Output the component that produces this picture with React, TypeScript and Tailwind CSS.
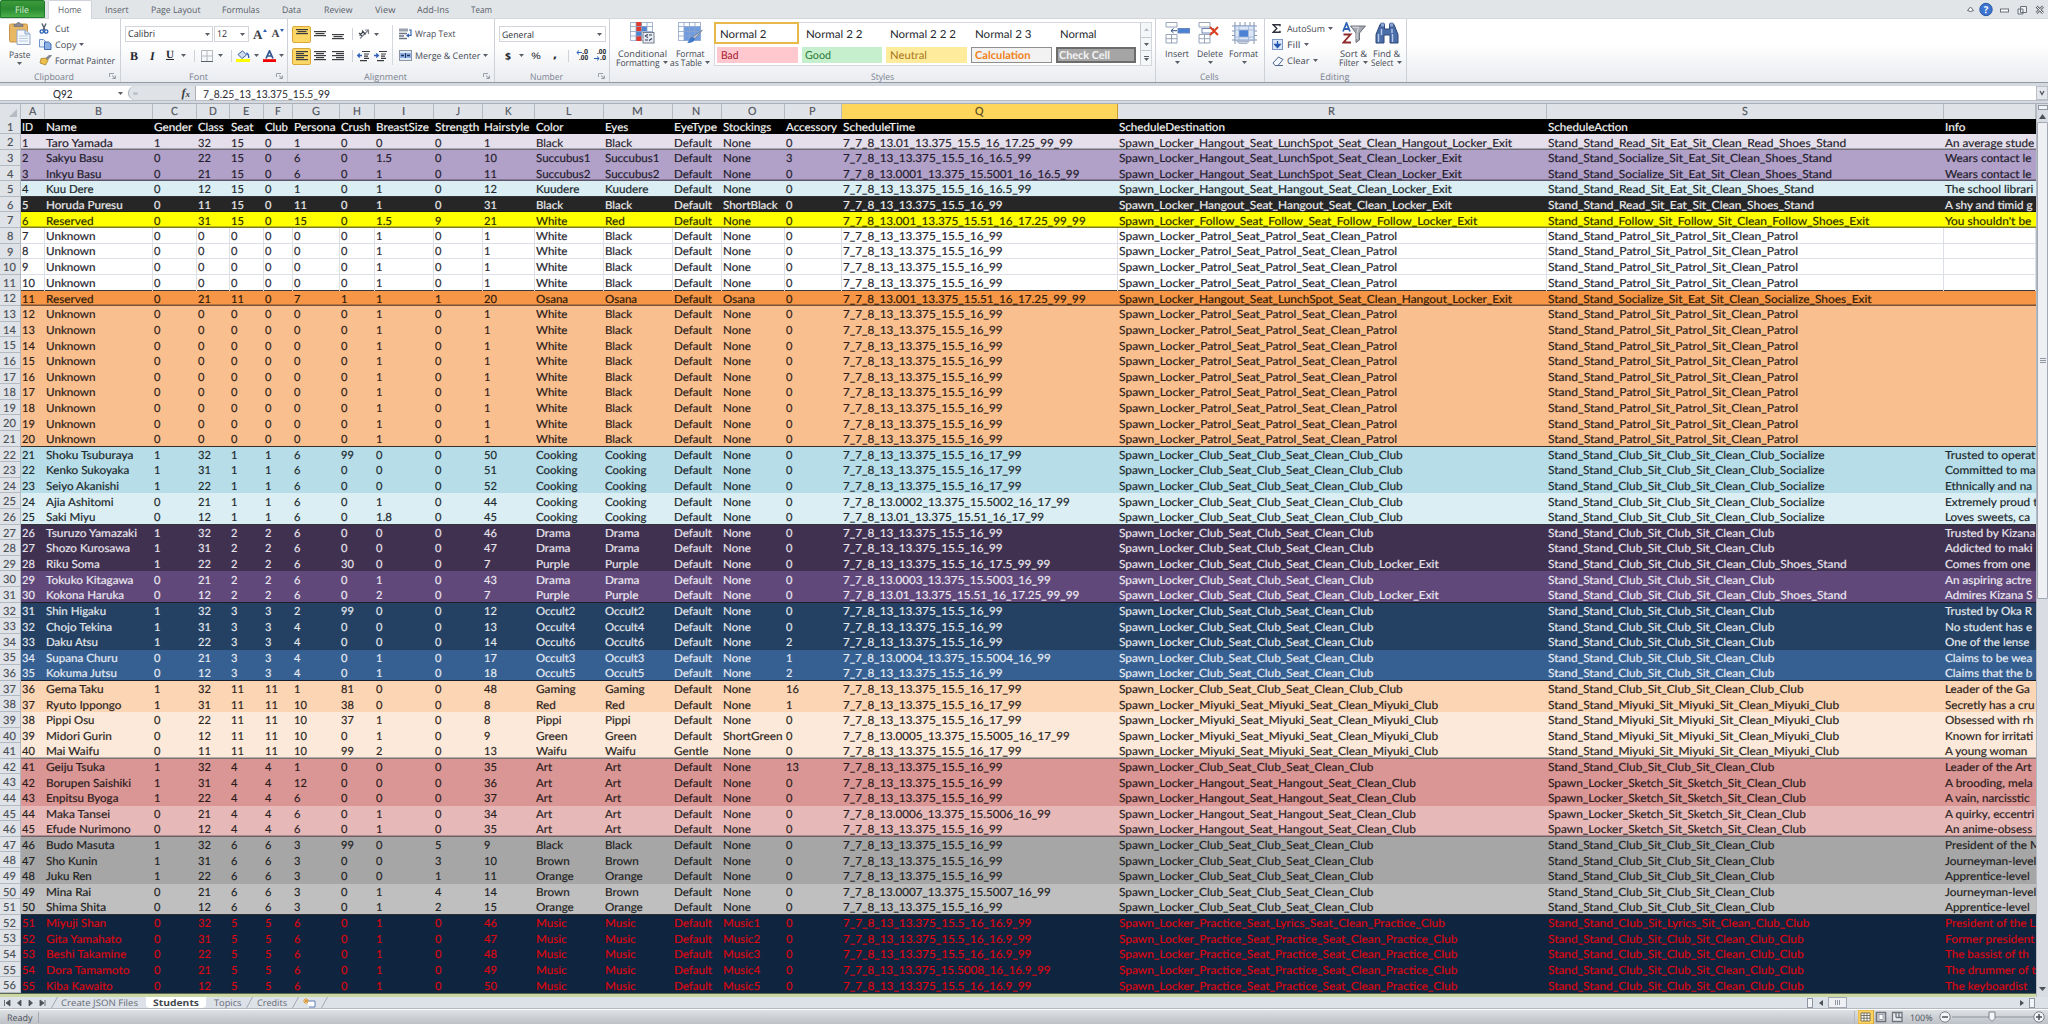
import React from "react";

const SHEET_FONT = "Lato, 'Open Sans', sans-serif";
const UI_FONT = "'Open Sans', 'Noto Sans', sans-serif";

/* ---------- text fitting ---------- */

const ctx = document.createElement("canvas").getContext("2d")!;

function natural(text: string, size: number, family: string, bold = false) {
  ctx.font = `${bold ? "bold " : ""}100px ${family}`;
  return (ctx.measureText(text).width * size) / 100;
}

// Advance widths of the sheet face, in 1/2048 em.
const ADV: Record<string, number> = {
  " ": 463, a: 981, b: 1076, c: 866, d: 1076, e: 1019, f: 625, g: 964, h: 1076, i: 470, j: 490, k: 931, l: 470,
  m: 1636, n: 1076, o: 1080, p: 1076, q: 1076, r: 714, s: 801, t: 686, u: 1076, v: 925, w: 1464, x: 887, y: 927,
  z: 809, A: 1185, B: 1114, C: 1092, D: 1260, E: 1000, F: 941, G: 1292, H: 1276, I: 516, J: 653, K: 1064, L: 861,
  M: 1751, N: 1322, O: 1356, P: 1058, Q: 1378, R: 1112, S: 941, T: 998, U: 1314, V: 1162, W: 1822, X: 1063,
  Y: 998, Z: 959, _: 1020, ".": 517, ",": 511, "-": 627, "'": 452,
};

function sheetWidth(text: string) {
  let sum = 0;
  for (const ch of text) sum += ADV[ch] ?? 1038;
  return (sum / 2048) * 12.67;
}

type FitProps = { t: string; w: number; size?: number; sheet?: boolean; bold?: boolean; className?: string };

function Fit({ t, w, size = 9, sheet = false, bold = false, className = "" }: FitProps) {
  const family = sheet ? SHEET_FONT : UI_FONT;
  const n = natural(t, size, family, bold);
  return (
    <span
      className={`inline-block shrink-0 origin-left whitespace-pre ${bold ? "font-bold" : ""} ${className}`}
      style={{ fontFamily: family, fontSize: size, transform: `scaleX(${w / n})`, marginRight: w - n }}
    >
      {t}
    </span>
  );
}

function Cell({ t }: { t: string }) {
  return <Fit t={t} w={sheetWidth(t)} size={11.2} sheet className="[-webkit-text-stroke:0.18px_currentColor]" />;
}

/* ---------- sheet data ---------- */

const COLS: { name: string; cls: string }[] = [
  { name: "A", cls: "w-[24.5px]" },
  { name: "B", cls: "w-[108px]" },
  { name: "C", cls: "w-[43.5px]" },
  { name: "D", cls: "w-[33.5px]" },
  { name: "E", cls: "w-[33.5px]" },
  { name: "F", cls: "w-[29px]" },
  { name: "G", cls: "w-[47px]" },
  { name: "H", cls: "w-[35px]" },
  { name: "I", cls: "w-[59.5px]" },
  { name: "J", cls: "w-[48.5px]" },
  { name: "K", cls: "w-[52px]" },
  { name: "L", cls: "w-[69px]" },
  { name: "M", cls: "w-[69px]" },
  { name: "N", cls: "w-[49px]" },
  { name: "O", cls: "w-[63px]" },
  { name: "P", cls: "w-[57.5px]" },
  { name: "Q", cls: "w-[275.5px]" },
  { name: "R", cls: "w-[429px]" },
  { name: "S", cls: "w-[397.5px]" },
  { name: "", cls: "w-[92px]" },
];

const HEAD =
  "ID|Name|Gender|Class|Seat|Club|Persona|Crush|BreastSize|Strength|Hairstyle|Color|Eyes|EyeType|Stockings|Accessory|ScheduleTime|ScheduleDestination|ScheduleAction|Info";

const T99 = "7_7_8_13_13.375_15.5_16_99";
const T17 = "7_7_8_13_13.375_15.5_16_17_99";
const T165 = "7_7_8_13_13.375_15.5_16_16.5_99";
const T169 = "7_7_8_13_13.375_15.5_16_16.9_99";
const PATROL = T99 + "|Spawn_Locker_Patrol_Seat_Patrol_Seat_Clean_Patrol|Stand_Stand_Patrol_Sit_Patrol_Sit_Clean_Patrol|";
const EMPTY = "Unknown|0|0|0|0|0|0|1|0|1|White|Black|Default|None|0|" + PATROL;
const D_CLUB = "Spawn_Locker_Club_Seat_Club_Seat_Clean_Club";
const A_CLUB = "Stand_Stand_Club_Sit_Club_Sit_Clean_Club";
const D_COOK = D_CLUB + "_Club|" + A_CLUB + "_Socialize";
const CLUB = D_CLUB + "|" + A_CLUB;
const CLUB_EXIT = D_CLUB + "_Locker_Exit|" + A_CLUB + "_Shoes_Stand";
const MIYUKI =
  "Spawn_Locker_Miyuki_Seat_Miyuki_Seat_Clean_Miyuki_Club|Stand_Stand_Miyuki_Sit_Miyuki_Sit_Clean_Miyuki_Club";
const SKETCH =
  "Spawn_Locker_Hangout_Seat_Hangout_Seat_Clean_Club|Spawn_Locker_Sketch_Sit_Sketch_Sit_Clean_Club";
const PRACTICE = "Spawn_Locker_Practice_Seat_Practice_Seat_Clean_Practice_Club|" + A_CLUB + "_Club";
const LUNCH = "Spawn_Locker_Hangout_Seat_LunchSpot_Seat_Clean_";
const HANG = "Spawn_Locker_Hangout_Seat_Hangout_Seat_Clean_Locker_Exit";

const C = {
  head: "bg-black text-[#f4f4f4]",
  lilac: "bg-[#e5dfec] text-[#26222c]",
  violet: "bg-[#b1a0c7] text-[#221c2c]",
  ice: "bg-[#daeef3] text-[#20282c]",
  coal: "bg-[#262626] text-[#ececec]",
  yellow: "bg-[#ffff00] text-[#2c2c00]",
  white: "bg-white text-[#262630]",
  orange: "bg-[#f79646] text-[#2c1a0a]",
  peach: "bg-[#fabf8f] text-[#2c2018]",
  aqua: "bg-[#b6dde8] text-[#1c282c]",
  plum: "bg-[#403151] text-[#e8e4ec]",
  grape: "bg-[#60497a] text-[#ece8f2]",
  navy: "bg-[#244062] text-[#e2e8ee]",
  blue: "bg-[#366092] text-[#e6ecf4]",
  apricot: "bg-[#fcd5b4] text-[#2a211a]",
  cream: "bg-[#fde9d9] text-[#2a2522]",
  rose: "bg-[#da9694] text-[#2a1a1a]",
  pink: "bg-[#e6b8b7] text-[#2a1f1f]",
  gray: "bg-[#a6a6a6] text-[#1e1e22]",
  silver: "bg-[#bfbfbf] text-[#1e1e22]",
  night: "bg-[#0f243e] text-[#dc0612]",
};

type Edge = "" | "thin" | "thick";
const R: [string, Edge, string][] = [
  [C.head, "", HEAD],
  [C.lilac, "thick", "1|Taro Yamada|1|32|15|0|1|0|0|0|1|Black|Black|Default|None|0|7_7_8_13.01_13.375_15.5_16_17.25_99_99|" + LUNCH + "Hangout_Locker_Exit|Stand_Stand_Read_Sit_Eat_Sit_Clean_Read_Shoes_Stand|An average stude"],
  [C.violet, "", "2|Sakyu Basu|0|22|15|0|6|0|1.5|0|10|Succubus1|Succubus1|Default|None|3|" + T165 + "|" + LUNCH + "Locker_Exit|Stand_Stand_Socialize_Sit_Eat_Sit_Clean_Shoes_Stand|Wears contact le"],
  [C.violet, "thick", "3|Inkyu Basu|0|21|15|0|6|0|1|0|11|Succubus2|Succubus2|Default|None|0|7_7_8_13.0001_13.375_15.5001_16_16.5_99|" + LUNCH + "Locker_Exit|Stand_Stand_Socialize_Sit_Eat_Sit_Clean_Shoes_Stand|Wears contact le"],
  [C.ice, "thin", "4|Kuu Dere|0|12|15|0|1|0|1|0|12|Kuudere|Kuudere|Default|None|0|" + T165 + "|" + HANG + "|Stand_Stand_Read_Sit_Eat_Sit_Clean_Shoes_Stand|The school librari"],
  [C.coal, "thin", "5|Horuda Puresu|0|11|15|0|11|0|1|0|31|Black|Black|Default|ShortBlack|0|" + T99 + "|" + HANG + "|Stand_Stand_Read_Sit_Eat_Sit_Clean_Shoes_Stand|A shy and timid g"],
  [C.yellow, "thick", "6|Reserved|0|31|15|0|15|0|1.5|9|21|White|Red|Default|None|0|7_7_8_13.001_13.375_15.51_16_17.25_99_99|Spawn_Locker_Follow_Seat_Follow_Seat_Follow_Follow_Locker_Exit|Stand_Stand_Follow_Sit_Follow_Sit_Clean_Follow_Shoes_Exit|You shouldn't be"],
  [C.white, "", "7|" + EMPTY],
  [C.white, "", "8|" + EMPTY],
  [C.white, "", "9|" + EMPTY],
  [C.white, "thin", "10|" + EMPTY],
  [C.orange, "thick", "11|Reserved|0|21|11|0|7|1|1|1|20|Osana|Osana|Default|Osana|0|7_7_8_13.001_13.375_15.51_16_17.25_99_99|" + LUNCH + "Hangout_Locker_Exit|Stand_Stand_Socialize_Sit_Eat_Sit_Clean_Socialize_Shoes_Exit|"],
  [C.peach, "", "12|" + EMPTY],
  [C.peach, "", "13|" + EMPTY],
  [C.peach, "", "14|" + EMPTY],
  [C.peach, "", "15|" + EMPTY],
  [C.peach, "", "16|" + EMPTY],
  [C.peach, "", "17|" + EMPTY],
  [C.peach, "", "18|" + EMPTY],
  [C.peach, "", "19|" + EMPTY],
  [C.peach, "thin", "20|" + EMPTY],
  [C.aqua, "", "21|Shoku Tsuburaya|1|32|1|1|6|99|0|0|50|Cooking|Cooking|Default|None|0|" + T17 + "|" + D_COOK + "|Trusted to operat"],
  [C.aqua, "", "22|Kenko Sukoyaka|1|31|1|1|6|0|0|0|51|Cooking|Cooking|Default|None|0|" + T17 + "|" + D_COOK + "|Committed to ma"],
  [C.aqua, "", "23|Seiyo Akanishi|1|22|1|1|6|0|0|0|52|Cooking|Cooking|Default|None|0|" + T17 + "|" + D_COOK + "|Ethnically and na"],
  [C.ice, "", "24|Ajia Ashitomi|0|21|1|1|6|0|1|0|44|Cooking|Cooking|Default|None|0|7_7_8_13.0002_13.375_15.5002_16_17_99|" + D_COOK + "|Extremely proud t"],
  [C.ice, "thin", "25|Saki Miyu|0|12|1|1|6|0|1.8|0|45|Cooking|Cooking|Default|None|0|7_7_8_13.01_13.375_15.51_16_17_99|" + D_COOK + "|Loves sweets, ca"],
  [C.plum, "", "26|Tsuruzo Yamazaki|1|32|2|2|6|0|0|0|46|Drama|Drama|Default|None|0|" + T99 + "|" + CLUB + "|Trusted by Kizana"],
  [C.plum, "", "27|Shozo Kurosawa|1|31|2|2|6|0|0|0|47|Drama|Drama|Default|None|0|" + T99 + "|" + CLUB + "|Addicted to maki"],
  [C.plum, "", "28|Riku Soma|1|22|2|2|6|30|0|0|7|Purple|Purple|Default|None|0|7_7_8_13_13.375_15.5_16_17.5_99_99|" + CLUB_EXIT + "|Comes from one"],
  [C.grape, "", "29|Tokuko Kitagawa|0|21|2|2|6|0|1|0|43|Drama|Drama|Default|None|0|7_7_8_13.0003_13.375_15.5003_16_99|" + CLUB + "|An aspiring actre"],
  [C.grape, "thin", "30|Kokona Haruka|0|12|2|2|6|0|2|0|7|Purple|Purple|Default|None|0|7_7_8_13.01_13.375_15.51_16_17.25_99_99|" + CLUB_EXIT + "|Admires Kizana S"],
  [C.navy, "", "31|Shin Higaku|1|32|3|3|2|99|0|0|12|Occult2|Occult2|Default|None|0|" + T99 + "|" + CLUB + "|Trusted by Oka R"],
  [C.navy, "", "32|Chojo Tekina|1|31|3|3|4|0|0|0|13|Occult4|Occult4|Default|None|0|" + T99 + "|" + CLUB + "|No student has e"],
  [C.navy, "", "33|Daku Atsu|1|22|3|3|4|0|0|0|14|Occult6|Occult6|Default|None|2|" + T99 + "|" + CLUB + "|One of the lense"],
  [C.blue, "", "34|Supana Churu|0|21|3|3|4|0|1|0|17|Occult3|Occult3|Default|None|1|7_7_8_13.0004_13.375_15.5004_16_99|" + CLUB + "|Claims to be wea"],
  [C.blue, "thin", "35|Kokuma Jutsu|0|12|3|3|4|0|1|0|18|Occult5|Occult5|Default|None|2|" + T99 + "|" + CLUB + "|Claims that the b"],
  [C.apricot, "", "36|Gema Taku|1|32|11|11|1|81|0|0|48|Gaming|Gaming|Default|None|16|" + T17 + "|" + D_CLUB + "_Club|" + A_CLUB + "_Club|Leader of the Ga"],
  [C.apricot, "", "37|Ryuto Ippongo|1|31|11|11|10|38|0|0|8|Red|Red|Default|None|1|" + T17 + "|" + MIYUKI + "|Secretly has a cru"],
  [C.cream, "", "38|Pippi Osu|0|22|11|11|10|37|1|0|8|Pippi|Pippi|Default|None|0|" + T17 + "|" + MIYUKI + "|Obsessed with rh"],
  [C.cream, "", "39|Midori Gurin|0|12|11|11|10|0|1|0|9|Green|Green|Default|ShortGreen|0|7_7_8_13.0005_13.375_15.5005_16_17_99|" + MIYUKI + "|Known for irritati"],
  [C.cream, "thick", "40|Mai Waifu|0|11|11|11|10|99|2|0|13|Waifu|Waifu|Gentle|None|0|" + T17 + "|" + MIYUKI + "|A young woman"],
  [C.rose, "", "41|Geiju Tsuka|1|32|4|4|1|0|0|0|35|Art|Art|Default|None|13|" + T99 + "|" + CLUB + "|Leader of the Art"],
  [C.rose, "", "42|Borupen Saishiki|1|31|4|4|12|0|0|0|36|Art|Art|Default|None|0|" + T99 + "|" + SKETCH + "|A brooding, mela"],
  [C.rose, "", "43|Enpitsu Byoga|1|22|4|4|6|0|0|0|37|Art|Art|Default|None|0|" + T99 + "|" + SKETCH + "|A vain, narcisstic"],
  [C.pink, "", "44|Maka Tansei|0|21|4|4|6|0|1|0|34|Art|Art|Default|None|0|7_7_8_13.0006_13.375_15.5006_16_99|" + SKETCH + "|A quirky, eccentri"],
  [C.pink, "thick", "45|Efude Nurimono|0|12|4|4|6|0|1|0|35|Art|Art|Default|None|0|" + T99 + "|" + SKETCH + "|An anime-obsess"],
  [C.gray, "", "46|Budo Masuta|1|32|6|6|3|99|0|5|9|Black|Black|Default|None|0|" + T99 + "|" + CLUB + "|President of the M"],
  [C.gray, "", "47|Sho Kunin|1|31|6|6|3|0|0|3|10|Brown|Brown|Default|None|0|" + T99 + "|" + CLUB + "|Journeyman-level"],
  [C.gray, "", "48|Juku Ren|1|22|6|6|3|0|0|1|11|Orange|Orange|Default|None|0|" + T99 + "|" + CLUB + "|Apprentice-level"],
  [C.silver, "", "49|Mina Rai|0|21|6|6|3|0|1|4|14|Brown|Brown|Default|None|0|7_7_8_13.0007_13.375_15.5007_16_99|" + CLUB + "|Journeyman-level"],
  [C.silver, "thin", "50|Shima Shita|0|12|6|6|3|0|1|2|15|Orange|Orange|Default|None|0|" + T99 + "|" + CLUB + "|Apprentice-level"],
  [C.night, "", "51|Miyuji Shan|0|32|5|5|6|0|1|0|46|Music|Music|Default|Music1|0|" + T169 + "|Spawn_Locker_Practice_Seat_Lyrics_Seat_Clean_Practice_Club|Stand_Stand_Club_Sit_Lyrics_Sit_Clean_Club_Club|President of the L"],
  [C.night, "", "52|Gita Yamahato|0|31|5|5|6|0|1|0|47|Music|Music|Default|Music2|0|" + T169 + "|" + PRACTICE + "|Former president"],
  [C.night, "", "53|Beshi Takamine|0|22|5|5|6|0|1|0|48|Music|Music|Default|Music3|0|" + T169 + "|" + PRACTICE + "|The bassist of th"],
  [C.night, "", "54|Dora Tamamoto|0|21|5|5|6|0|1|0|49|Music|Music|Default|Music4|0|7_7_8_13_13.375_15.5008_16_16.9_99|" + PRACTICE + "|The drummer of t"],
  [C.night, "", "55|Kiba Kawaito|0|12|5|5|6|0|1|0|50|Music|Music|Default|Music5|0|" + T169 + "|" + PRACTICE + "|The keyboardist"],
];

const EDGE: Record<Edge, string> = {
  "": "",
  thin: "shadow-[inset_0_-1px_0_rgba(20,20,24,0.85)]",
  thick: "shadow-[inset_0_-1.5px_0_rgba(40,40,48,0.62)]",
};

function SheetRow({ i }: { i: number }) {
  const [tone, edge, line] = R[i];
  const grid = tone === C.white;
  return (
    <div className="flex h-[15.62px] shrink-0">
      <div className="flex w-[20.5px] shrink-0 items-center justify-center border-r border-b border-[#b4bac2] bg-[#dfe3e8] pt-[2.5px] text-[#4c5058]">
        <Cell t={String(i + 1)} />
      </div>
      <div className={`flex grow overflow-hidden ${tone} ${EDGE[edge]}`}>
        {line.split("|").map((t, k) => (
          <div
            key={k}
            className={`flex shrink-0 items-center pt-[2px] pl-[1.4px] leading-none ${COLS[k].cls} ${
              grid ? (edge ? "border-r border-[#dcdfe6]" : "border-r border-b border-[#dcdfe6]") : ""
            }`}
          >
            {t && <Cell t={t} />}
          </div>
        ))}
      </div>
    </div>
  );
}

/* ---------- small drawings ---------- */

function Arrow({ className = "" }: { className?: string }) {
  return (
    <svg className={`shrink-0 ${className}`} width="5" height="3" viewBox="0 0 5 3">
      <path d="M0 0h5L2.5 3z" fill="#5a5e66" />
    </svg>
  );
}

function Sep({ className = "" }: { className?: string }) {
  return <div className={`h-3 w-px shrink-0 bg-[#cfd3d9] ${className}`} />;
}

function Lines({ rows, align = "c", y = 0 }: { rows: number[]; align?: "l" | "c" | "r"; y?: number }) {
  return (
    <svg width="12" height="12" viewBox="0 0 12 12" className="shrink-0">
      {rows.map((w, i) => (
        <rect
          key={i}
          x={align === "l" ? 0 : align === "r" ? 12 - w : (12 - w) / 2}
          y={y + i * 2}
          width={w}
          height="1.2"
          fill="#3c3c40"
        />
      ))}
    </svg>
  );
}

function Indent({ out }: { out?: boolean }) {
  return (
    <svg width="13" height="12" viewBox="0 0 13 12" className="shrink-0">
      <path d="M5 1.5h8M7 4h5M7 6.2h4M7 8.4h5M3 10.6h7" stroke="#3c3c40" strokeWidth="1.2" />
      <path d={out ? "M0 5.5h4M2.2 3.5l2.2 2-2.2 2" : "M5 5.5H1M2.8 3.5L.6 5.5l2.2 2"} stroke="#2f62b5" strokeWidth="1.3" fill="none" />
    </svg>
  );
}

function Group({ label, w, lw, launcher, children }: { label: string; w: string; lw: number; launcher?: boolean; children: React.ReactNode }) {
  return (
    <div className={`flex shrink-0 flex-col border-r border-[#cdd2d8] ${w}`}>
      <div className="flex h-[50px]">{children}</div>
      <div className="flex h-[13px] items-center pt-px text-[#7b8290]">
        <div className="flex grow justify-center">
          <Fit t={label} w={lw} />
        </div>
        {launcher && (
          <svg width="7" height="6" viewBox="0 0 7 6" className="mr-1">
            <path d="M.5 4V.5H5" stroke="#9aa0aa" fill="none" />
            <path d="M3 2.5l3 2.8M6.3 2.6v3H3.4" stroke="#8a909a" fill="none" />
          </svg>
        )}
      </div>
    </div>
  );
}

function BigButton({ icon, a, aw, b, bw, w }: { icon: React.ReactNode; a: string; aw: number; b?: string; bw?: number; w: string }) {
  return (
    <div className={`flex shrink-0 flex-col items-center pt-[3px] leading-none text-[#454a54] ${w}`}>
      {icon}
      <div className="mt-[4px] flex h-[10px] items-center">
        <Fit t={a} w={aw} />
      </div>
      <div className="flex h-[9px] items-center gap-[3px]">
        {b && <Fit t={b} w={bw!} />}
        <Arrow />
      </div>
    </div>
  );
}

function SmallButton({ icon, t, w, arrow }: { icon: React.ReactNode; t: string; w: number; arrow?: boolean }) {
  return (
    <div className="flex h-[16.3px] items-center text-[#454a54]">
      <div className="flex w-[15.5px] items-center">{icon}</div>
      <Fit t={t} w={w} />
      {arrow && <Arrow className="ml-[3px]" />}
    </div>
  );
}

const TABS: [string, number, string][] = [
  ["Insert", 23.5, "ml-[12.5px]"],
  ["Page Layout", 49.5, "ml-[22.5px]"],
  ["Formulas", 37.5, "ml-[22px]"],
  ["Data", 19, "ml-[22.5px]"],
  ["Review", 28.5, "ml-[22.5px]"],
  ["View", 20.5, "ml-[22.5px]"],
  ["Add-Ins", 32, "ml-[22px]"],
  ["Team", 21, "ml-[22px]"],
];

function TabBar() {
  return (
    <div className="flex h-[19px] items-center border-b border-[#d3d7dc] bg-[#e1e5e8] text-[#5a5f68]">
      <div className="flex h-[18px] w-[44.5px] items-center justify-center rounded-t-[2px] border border-[#1f7a2c] bg-linear-to-b from-[#3d9a3c] via-[#2a8a30] to-[#4bb04a] text-[#d8f0d4]">
        <Fit t="File" w={14} />
      </div>
      <div className="ml-[3.5px] flex h-[19px] w-[44px] items-center justify-center rounded-t-[2px] border-x border-t border-[#d0d4da] bg-white">
        <Fit t="Home" w={23.5} />
      </div>
      {TABS.map(([t, w, m]) => (
        <div key={t} className={`flex items-center ${m}`}>
          <Fit t={t} w={w} />
        </div>
      ))}
      <svg className="mr-[3px] ml-auto" width="82" height="16" viewBox="0 0 82 16">
        <path d="M4.5 9.5L7.5 6l3 3.5-3 1z" fill="#fff" stroke="#5e636c" />
        <circle cx="23" cy="8.5" r="6.2" fill="#3d74cf" stroke="#2a5aa8" />
        <text x="23" y="12" textAnchor="middle" fontSize="9.5" fontWeight="700" fill="#fff" fontFamily="Open Sans">?</text>
        <rect x="37.5" y="8" width="8" height="3" fill="#fff" stroke="#6b7079" />
        <path d="M57.500 5.500h6v6h-6zM55 8h5v5h-5z" fill="#eef0f3" stroke="#6b7079" />
        <path d="M73.500 5.500l6.500 6.500M80 5.500l-6.500 6.500" stroke="#5e636c" strokeWidth="2.600" />
        <path d="M73.500 5.500l6.500 6.500M80 5.500l-6.500 6.500" stroke="#fff" strokeWidth="1" />
      </svg>
    </div>
  );
}

function PasteIcon() {
  return (
    <svg width="22" height="23" viewBox="0 0 22 23">
      <rect x="0.500" y="2" width="18" height="18" rx="1.500" fill="#e9b862" stroke="#c8924a" />
      <path d="M5 4.500V2.500h2.500a2 2 0 014 0H14v2z" fill="#8c8f98" stroke="#676b74" strokeWidth=".7" />
      <path d="M8 8h8l5 4v10.500H8z" fill="#f4f8fd" stroke="#8ea6c8" />
      <path d="M16 8v4h5" fill="#cfdff2" stroke="#8ea6c8" />
      <path d="M10 14h9M10 16.500h9M10 19h9" stroke="#b9cbe2" />
    </svg>
  );
}

function GridIcon({ kind }: { kind: "cond" | "table" }) {
  return (
    <svg width="25" height="22" viewBox="0 0 25 22">
      <rect x=".5" y=".5" width="22" height="18" fill="#fbfcfe" stroke="#a9b8d2" />
      {kind === "cond" ? (
        <>
          <rect x="6" y="0" width="6" height="19" fill="#e23a2c" />
          <rect x="12" y="4" width="5" height="5" fill="#4f83cf" />
          <rect x="6" y="9" width="6" height="5" fill="#4f83cf" />
        </>
      ) : (
        <rect x="6" y="4.500" width="16.500" height="14" fill="#6f9be0" />
      )}
      <path d="M6 0v19M11.500 0v19M17 0v19M0 4.500h23M0 9.500h23M0 14h23" stroke="#8da3c8" strokeWidth=".8" />
      {kind === "cond" ? (
        <>
          <rect x="13" y="10.500" width="11" height="10.500" fill="#e8ecf2" stroke="#747d8e" />
          <path d="M15 14l3-1.500M15 14l3 1.500M22 16.500l-3 2M15 18h3M19 13h3" stroke="#2f3d58" strokeWidth="1.100" />
        </>
      ) : (
        <>
          <path d="M24.500 8l-8 9-2.500-1.500z" fill="#c7ccd5" stroke="#6d7482" strokeWidth=".7" />
          <path d="M17 16c0 4-4 5-8 5 2-1 2-5 5-6z" fill="#3f78c9" />
        </>
      )}
    </svg>
  );
}

function CellsIcon({ kind }: { kind: "insert" | "delete" | "format" }) {
  if (kind === "format")
    return (
      <svg width="25" height="22" viewBox="0 0 25 22">
        <path d="M3 0v22M8 0v4M13 0v4M18 0v4M22 0v22M0 4h25M0 18h25M0 9h3M0 13.500h3M22 9h3M22 13.500h3" stroke="#8494b0" />
        <rect x="3" y="4" width="19" height="14" fill="#dce7f7" stroke="#8ea5cb" />
        <rect x="7" y="8" width="9" height="7" fill="#4b82d6" />
        <path d="M7 4v14M16.500 4v14M3 8h19M3 15h19" stroke="#9fb3d4" strokeWidth=".8" />
        <path d="M5 19.500h12l-2 2H7z" fill="#c7d2e4" stroke="#8494b0" strokeWidth=".6" />
      </svg>
    );
  return (
    <svg width="25" height="22" viewBox="0 0 25 22">
      <path d="M1 .5h11v4.500H1zM1 12.500h11v8.500H1zM1 16.700h11M6.500 12.500V21" fill="#fff" stroke="#98a4b8" />
      <rect x={kind === "insert" ? 13 : 4} y="6.500" width="11.500" height="4.500" fill={kind === "insert" ? "#4b82d6" : "#fff"} stroke="#6a86b8" />
      {kind === "insert" ? (
        <path d="M12 8.700H6M8.500 6.500L6 8.700l2.500 2.200" stroke="#33507f" fill="none" />
      ) : (
        <path d="M12 5l8 8M20 5l-8 8" stroke="#e03c1e" strokeWidth="2" />
      )}
    </svg>
  );
}

function SortIcon() {
  return (
    <svg width="24" height="22" viewBox="0 0 24 22">
      <path d="M1 9.500L4.500 1 8 9.500M2.300 7h4.400" stroke="#2f62b5" strokeWidth="1.800" fill="none" />
      <path d="M1.500 12.500h7l-7 8h7.500" stroke="#8e2a2a" strokeWidth="1.800" fill="none" />
      <path d="M8.500 4h15l-6 7v7l-3.500 2.500V11z" fill="#a3a8b0" stroke="#6e737c" />
      <path d="M10.500 5.200h6l-1.500 6v6" stroke="#dfe2e6" fill="none" />
    </svg>
  );
}

function FindIcon() {
  return (
    <svg width="24" height="22" viewBox="0 0 24 22">
      <path d="M5 2.500h4.500V7h5V2.500H19l4 10V21h-8v-8h-6v8H1v-8.500z" fill="#4c6ea8" stroke="#2c4677" />
      <rect x="5.500" y="1" width="4" height="4" rx="1" fill="#8ba7d6" stroke="#2c4677" strokeWidth=".6" />
      <rect x="14.500" y="1" width="4" height="4" rx="1" fill="#8ba7d6" stroke="#2c4677" strokeWidth=".6" />
      <path d="M3.500 12v8M6.500 7v6M17.500 12v8M17 7v4" stroke="#b6caea" strokeWidth="1.400" />
    </svg>
  );
}

const STYLES_TOP: [string, number][] = [
  ["Normal 2", 46.5],
  ["Normal 2 2", 56.5],
  ["Normal 2 2 2", 66],
  ["Normal 2 3", 56.5],
  ["Normal", 36.5],
];
const STYLES_LOW: [string, number, string, boolean][] = [
  ["Bad", 17.5, "bg-[#ffc7ce] text-[#a8182c]", false],
  ["Good", 26, "bg-[#c6efce] text-[#2a7a34]", false],
  ["Neutral", 37, "bg-[#ffeb9c] text-[#a8761a]", false],
  ["Calculation", 55.5, "border border-[#8f8f8f] bg-[#f2f2f2] text-[#f08220] pl-[2.5px]", true],
  ["Check Cell", 51, "border-2 border-[#6c6c6c] bg-[#a5a5a5] text-[#f4f4f4] pl-[1.5px]", true],
];

function Gallery() {
  return (
    <div className="mt-[3px] ml-[4px] flex h-[44px] w-[438px] shrink-0 border border-[#d4d8de] bg-white">
      <div className="flex grow flex-col">
        <div className="-mt-px -ml-px flex h-[22px]">
          {STYLES_TOP.map(([t, w], i) => (
            <div
              key={t}
              className={`flex w-[84.7px] shrink-0 items-center pt-[2px] ${
                i === 0 ? "border-2 border-[#e8b84a] pl-[4px]" : "pl-[7px]"
              }`}
            >
              <Fit t={t} w={w} size={11} sheet className="text-[#26282e]" />
            </div>
          ))}
        </div>
        <div className="mt-[3px] flex h-[16px] gap-[4.200px] pl-[2px]">
          {STYLES_LOW.map(([t, w, cls, bold]) => (
            <div key={t} className={`flex w-[80.5px] shrink-0 items-center ${cls} ${bold ? "" : "pl-[3.5px]"}`}>
              <Fit t={t} w={w} size={11} sheet bold={bold} />
            </div>
          ))}
        </div>
      </div>
      <div className="flex w-[11px] shrink-0 flex-col divide-y divide-[#c4c9d0] border-l border-[#c4c9d0] bg-[#f4f6f8]">
        <div className="flex h-[15px] items-center justify-center">
          <svg width="5" height="3"><path d="M0 3h5L2.500 0z" fill="#b8bcc4" /></svg>
        </div>
        <div className="flex h-[14px] items-center justify-center"><Arrow /></div>
        <div className="flex h-[14px] flex-col items-center justify-center gap-px">
          <div className="h-px w-[5px] bg-[#5a5e66]" />
          <Arrow />
        </div>
      </div>
    </div>
  );
}

const HOT = "flex h-[17px] w-[19px] shrink-0 items-center justify-center rounded-[2px] border border-[#d9a83a] bg-[#fcd765]";

function Ribbon() {
  return (
    <div className="flex h-[64px] border-b border-[#9299a3] bg-linear-to-b from-white from-40% to-[#e9ecf0]">
      <Group label="Clipboard" w="w-[121px]" lw={40} launcher>
        <div className="ml-[6px] flex">
          <BigButton w="w-[27px]" icon={<PasteIcon />} a="Paste" aw={21.5} />
        </div>
        <div className="ml-[6px] pt-px">
          <SmallButton
            t="Cut"
            w={14.5}
            icon={
              <svg width="10" height="11" viewBox="0 0 10 11">
                <path d="M3 .5L6 7M7 .5L4 7" stroke="#56606e" strokeWidth="1.400" />
                <circle cx="2.800" cy="8.500" r="1.700" fill="none" stroke="#2f62b5" strokeWidth="1.300" />
                <circle cx="7.200" cy="8.500" r="1.700" fill="none" stroke="#2f62b5" strokeWidth="1.300" />
              </svg>
            }
          />
          <SmallButton
            t="Copy"
            w={21.5}
            arrow
            icon={
              <svg width="13" height="11" viewBox="0 0 13 11">
                <path d="M.5.5h4l2 2v5.500h-6z" fill="#e6effa" stroke="#6d93cc" />
                <path d="M5.500 3h4l2.500 2v5.500H5.500z" fill="#8db0e4" stroke="#3f6db5" />
              </svg>
            }
          />
          <SmallButton
            t="Format Painter"
            w={60}
            icon={
              <svg width="13" height="11" viewBox="0 0 13 11">
                <path d="M12.500.5L8 5.500l-2-1.500L10 .5z" fill="#8a8d94" stroke="#5e626a" strokeWidth=".6" />
                <path d="M2 3.500l4.500-.5L9 5.500 6.500 10 1 8z" fill="#eec04a" stroke="#9a7420" strokeWidth=".7" />
              </svg>
            }
          />
        </div>
      </Group>

      <Group label="Font" w="w-[167px]" lw={19} launcher>
        <div className="flex flex-col pt-[7px]">
          <div className="flex h-4 items-center">
            <div className="ml-[4px] flex h-4 w-[88px] items-center justify-between border border-[#d2d6dc] bg-white pr-[2px] pl-[1.5px]">
              <Fit t="Calibri" w={27} size={9.5} className="text-[#2c3038]" />
              <Arrow />
            </div>
            <div className="ml-px flex h-4 w-[35px] items-center justify-between border border-[#d2d6dc] bg-white pr-[3px] pl-[2px]">
              <Fit t="12" w={10} size={9.5} className="text-[#2c3038]" />
              <Arrow />
            </div>
            <span className="ml-[4px] w-[8px] font-['Liberation_Serif'] text-[13px] leading-none font-bold text-[#3c4048]">A</span>
            <svg className="mb-2 ml-[1.500px]" width="4" height="3"><path d="M0 3h4L2 0z" fill="#2f62b5" /></svg>
            <span className="ml-[5px] w-[7px] font-['Liberation_Serif'] text-[11px] leading-none font-bold text-[#3c4048]">A</span>
            <svg className="mb-2 ml-[1.500px]" width="4" height="3"><path d="M0 0h4L2 3z" fill="#2f62b5" /></svg>
          </div>
          <div className="mt-[5px] flex h-[17px] items-center text-[#26282e]">
            <span className="ml-[9px] w-[9px] font-['Liberation_Serif'] text-[12px] leading-none font-bold">B</span>
            <span className="ml-[11px] w-[6px] font-['Liberation_Serif'] text-[12px] leading-none font-bold italic">I</span>
            <span className="ml-[10px] w-[9px] font-['Liberation_Serif'] text-[11px] leading-none font-bold underline">U</span>
            <Arrow className="ml-[6px]" />
            <Sep className="ml-[8px]" />
            <svg className="ml-[6px]" width="12" height="12" viewBox="0 0 12 12">
              <path d="M.5.5h11v11H.5zM6 0v12M0 6h12" fill="none" stroke="#b4b8c0" />
              <path d="M0 11.500h12" stroke="#5c6068" />
            </svg>
            <Arrow className="ml-[5px]" />
            <Sep className="ml-[8px]" />
            <svg className="ml-[4px]" width="14" height="12" viewBox="0 0 14 12">
              <path d="M2 4.500L6.500.8 10.500 5 6 8.500z" fill="#cfdcf0" stroke="#41639c" />
              <path d="M10.500 3c2 1 2.500 3 2 5" stroke="#2f62b5" strokeWidth="1.400" fill="none" />
              <rect x="0" y="9" width="14" height="3" fill="#ffff00" />
            </svg>
            <Arrow className="ml-[4px]" />
            <svg className="ml-[4px]" width="13" height="12" viewBox="0 0 13 12">
              <path d="M3 8.500L6.500.8 10 8.500M4.300 6h4.400" stroke="#33558f" strokeWidth="1.700" fill="none" />
              <rect x="0" y="9.200" width="13" height="2.800" fill="#f00000" />
            </svg>
            <Arrow className="ml-[3px]" />
          </div>
        </div>
      </Group>

      <Group label="Alignment" w="w-[207px]" lw={43} launcher>
        <div className="flex flex-col pt-[6.500px]">
          <div className="flex h-[17px] items-center">
            <div className={`ml-[4px] ${HOT}`}><Lines rows={[12, 9, 12]} y={1} /></div>
            <div className="ml-[3px] flex"><Lines rows={[12, 9, 12]} y={3} /></div>
            <div className="ml-[6px] flex"><Lines rows={[12, 9, 12]} y={6} /></div>
            <Sep className="ml-[8px]" />
            <svg className="ml-[5px]" width="13" height="12" viewBox="0 0 13 12">
              <path d="M2 10.500l8-8M10.500 6V2H7" stroke="#7d828c" fill="none" strokeWidth="1.200" />
              <path d="M1 5l3 3M4 2.500l3.500 4M1.500 7.500l4-4" stroke="#3c4048" strokeWidth="1.200" />
            </svg>
            <Arrow className="ml-[3px]" />
          </div>
          <div className="mt-[5px] flex h-[17px] items-center">
            <div className={`ml-[4px] ${HOT}`}><Lines rows={[12, 8, 12, 8, 12]} align="l" y={1} /></div>
            <div className="ml-[3px] flex"><Lines rows={[12, 8, 12, 8, 12]} y={1} /></div>
            <div className="ml-[6px] flex"><Lines rows={[12, 8, 12, 8, 12]} align="r" y={1} /></div>
            <Sep className="ml-[8px]" />
            <div className="ml-[4px] flex"><Indent /></div>
            <div className="ml-[4px] flex"><Indent out /></div>
          </div>
        </div>
        <div className="mt-[6px] ml-[5px] h-[40px] w-px bg-[#d5d9de]" />
        <div className="ml-[6px] flex flex-col pt-[6.500px]">
          <SmallButton
            t="Wrap Text"
            w={40.5}
            icon={
              <svg width="13" height="12" viewBox="0 0 13 12">
                <rect x="0" y=".5" width="9" height="3" fill="#9aa1ad" />
                <path d="M0 5.500h8M0 8h5M0 10.500h8" stroke="#6b7380" strokeWidth="1.300" />
                <path d="M10 2h2v5.500H8.500M10 6l-2 1.500 2 1.500" stroke="#2f62b5" fill="none" strokeWidth="1.200" />
              </svg>
            }
          />
          <div className="mt-[5.500px]">
            <SmallButton
              t="Merge & Center"
              w={65.5}
              arrow
              icon={
                <svg width="13" height="11" viewBox="0 0 13 11">
                  <rect x=".5" y=".5" width="12" height="10" fill="#dfe8f6" stroke="#8b95a6" />
                  <rect x="1" y="3" width="11" height="5" fill="#8fb2e6" />
                  <path d="M2 5.500h3M8 5.500h3" stroke="#20355c" strokeWidth="1.400" />
                  <path d="M6.500 3v5" stroke="#20355c" />
                </svg>
              }
            />
          </div>
        </div>
      </Group>

      <Group label="Number" w="w-[115px]" lw={33} launcher>
        <div className="flex flex-col pt-[7px]">
          <div className="ml-[4px] flex h-4 w-[107px] items-center justify-between border border-[#d2d6dc] bg-white pr-[3px] pl-[2px]">
            <Fit t="General" w={32} className="text-[#2c3038]" />
            <Arrow />
          </div>
          <div className="mt-[5px] flex h-[17px] items-center text-[#26282e]">
            <div className="ml-[10px] flex w-[7px]"><Fit t="$" w={6} size={10} bold /></div>
            <Arrow className="ml-[7px]" />
            <div className="ml-[7px] flex w-[10px]"><Fit t="%" w={10} size={9} /></div>
            <div className="mb-[4px] ml-[12px] flex w-[4px]"><Fit t="," w={4} size={12} bold /></div>
            <Sep className="ml-[11px]" />
            <div className="ml-[7px] flex w-[12px] flex-col">
              <div className="flex h-[6px] items-center">
                <svg width="6" height="5"><path d="M6 2.500H1M3 .5L.8 2.500 3 4.500" stroke="#2f62b5" fill="none" /></svg>
                <Fit t=".0" w={6} size={7} bold />
              </div>
              <div className="flex h-[6px] items-center justify-end"><Fit t=".00" w={9} size={7} bold /></div>
            </div>
            <div className="ml-[6px] flex w-[12px] flex-col">
              <div className="flex h-[6px] items-center justify-end"><Fit t=".00" w={9} size={7} bold /></div>
              <div className="flex h-[6px] items-center">
                <svg width="6" height="5"><path d="M0 2.500h5M3 .5l2.200 2L3 4.500" stroke="#2f62b5" fill="none" /></svg>
                <Fit t=".0" w={6} size={7} bold />
              </div>
            </div>
          </div>
        </div>
      </Group>

      <Group label="Styles" w="w-[546px]" lw={23}>
        <BigButton w="ml-[4px] w-[56px]" icon={<GridIcon kind="cond" />} a="Conditional" aw={49} b="Formatting" bw={43.5} />
        <BigButton w="w-[40px]" icon={<GridIcon kind="table" />} a="Format" aw={28.500} b="as Table" bw={32} />
        <Gallery />
      </Group>

      <Group label="Cells" w="w-[108.5px]" lw={18.5}>
        <BigButton w="ml-[4px] w-[34px]" icon={<CellsIcon kind="insert" />} a="Insert" aw={24} />
        <BigButton w="w-[33px]" icon={<CellsIcon kind="delete" />} a="Delete" aw={26} />
        <BigButton w="w-[34px]" icon={<CellsIcon kind="format" />} a="Format" aw={29} />
      </Group>

      <Group label="Editing" w="w-[142px]" lw={29.5}>
        <div className="ml-[7px] w-[66px] pt-px">
          <SmallButton
            t="AutoSum"
            w={38}
            arrow
            icon={
              <svg width="9" height="9" viewBox="0 0 9 9">
                <path d="M8 2.300V.8H1.200L4.800 4.500 1.200 8.200H8V6.700" stroke="#2c3038" strokeWidth="1.400" fill="none" />
              </svg>
            }
          />
          <SmallButton
            t="Fill"
            w={13.5}
            arrow
            icon={
              <svg width="11" height="11" viewBox="0 0 11 11">
                <rect x=".5" y=".5" width="10" height="10" fill="#dbe7f8" stroke="#7d97c4" />
                <path d="M5.500 2v5M2.800 5.500l2.700 3 2.700-3z" stroke="#2458b0" strokeWidth="1.300" fill="#2458b0" />
              </svg>
            }
          />
          <SmallButton
            t="Clear"
            w={22.5}
            arrow
            icon={
              <svg width="12" height="10" viewBox="0 0 12 10">
                <path d="M1 7l5.500-6 4.500 2.500-5 6H3z" fill="#f4f7fc" stroke="#4f6590" />
                <path d="M6 9.500h5" stroke="#4f6590" />
              </svg>
            }
          />
        </div>
        <BigButton w="w-[32px]" icon={<SortIcon />} a="Sort &" aw={27} b="Filter" bw={20} />
        <BigButton w="w-[34px]" icon={<FindIcon />} a="Find &" aw={27} b="Select" bw={22.500} />
      </Group>
    </div>
  );
}

function FormulaBar() {
  return (
    <div className="flex h-[21px] flex-col bg-[#d4d8df]">
      <div className="mt-[3px] flex h-[15px] border-b border-[#b9bec7] bg-white">
        <div className="flex w-[128px] items-center">
          <div className="flex grow justify-center pt-[2px] pl-[7px]">
            <Fit t="Q92" w={19.500} size={11} sheet className="text-[#26282e]" />
          </div>
          <Arrow className="mr-[5px]" />
        </div>
        <div className="flex w-[68px] items-center rounded-l-full border-r border-l border-[#a9aeb8] bg-[#dfe3e8]">
          <div className="ml-[4px] h-[3px] w-[5px] rounded-full bg-[#bfc4cc]" />
          <span className="mr-[5px] ml-auto font-['Liberation_Serif'] text-[12px] leading-none font-bold text-[#3a3d44] italic">
            f<span className="text-[9px]">x</span>
          </span>
        </div>
        <div className="flex grow items-center pt-[2px] pl-[7px]">
          <Fit t="7_8.25_13_13.375_15.5_99" w={127} size={11} sheet className="text-[#26282e]" />
        </div>
        <div className="flex w-[12px] items-center justify-center border border-[#b9bec7] bg-[#e4e7ec]">
          <svg width="6" height="6"><path d="M1 1l2 3.500L5 1" stroke="#4c5058" fill="none" strokeWidth="1.200" /></svg>
        </div>
      </div>
      <div className="mt-[2px] h-px bg-[#a9aeb8]" />
    </div>
  );
}

function ColumnHeads() {
  return (
    <div className="flex h-[14.8px] shrink-0 bg-[#dfe3e8]">
      <div className="flex w-[20.5px] shrink-0 items-end justify-end border-r border-[#b4bac2] pr-[3px] pb-[2px]">
        <svg width="8" height="8"><path d="M8 0v8H0z" fill="#b6bbc4" /></svg>
      </div>
      {COLS.map((c, i) => (
        <div
          key={i}
          className={`flex shrink-0 items-center justify-center border-r pt-px leading-none ${c.cls} ${
            c.name === "Q"
              ? "border-[#c89a30] bg-[#ffd65c] text-[#5a4a20]"
              : "border-[#b4bac2] bg-[#dfe3e8] text-[#50545c]"
          }`}
        >
          {c.name && <Cell t={c.name} />}
        </div>
      ))}
    </div>
  );
}

function VerticalScroll() {
  return (
    <div className="flex w-[12px] shrink-0 flex-col items-center border-l border-[#b4bac2] bg-[#d9dde3]">
      <div className="mt-px h-[5px] w-[10px] border border-[#8f96a2] bg-[#f2f4f7]" />
      <svg className="mt-[4px]" width="7" height="5"><path d="M0 5h7L3.500 0z" fill="#4c5058" /></svg>
      <div className="mt-[3px] flex h-[477px] w-[11px] flex-col items-center justify-center gap-px rounded-[1px] border border-[#a3a9b4] bg-[#eef0f4]">
        <div className="h-px w-[6px] bg-[#8f96a2]" />
        <div className="h-px w-[6px] bg-[#8f96a2]" />
        <div className="h-px w-[6px] bg-[#8f96a2]" />
      </div>
      <svg className="mt-auto mb-[6px]" width="7" height="4"><path d="M0 0h7L3.500 4z" fill="#4c5058" /></svg>
    </div>
  );
}

function Slash() {
  return (
    <svg className="shrink-0" width="7" height="11" viewBox="0 0 7 11">
      <path d="M.5 11L6.500 0" stroke="#a3a9b4" />
    </svg>
  );
}

function SheetTabs() {
  return (
    <div className="flex h-[12px] shrink-0 items-center border-b border-[#b4b9c2] bg-[#dde1e8] text-[#666b75]">
      <svg width="48" height="8" viewBox="0 0 48 8" className="shrink-0">
        <path d="M4.500 1v6M10 1v6L6 4zM21 1v6l-3.500-3zM29 1v6l3.500-3zM40 1v6l4-3zM45 1v6" fill="#4c5058" stroke="#4c5058" strokeWidth=".8" />
      </svg>
      <div className="ml-[3px] flex"><Slash /></div>
      <div className="ml-[2.500px] flex"><Fit t="Create JSON Files" w={77} /></div>
      <div className="ml-[8px] flex h-full w-[60px] items-center justify-center rounded-b-[4px] bg-white text-[#44484f]">
        <Fit t="Students" w={46} bold />
      </div>
      <div className="ml-[8px] flex"><Fit t="Topics" w={27.5} /></div>
      <div className="ml-[5px] flex"><Slash /></div>
      <div className="ml-[4px] flex"><Fit t="Credits" w={30} /></div>
      <div className="ml-[5px] flex"><Slash /></div>
      <svg className="ml-[4px]" width="13" height="10" viewBox="0 0 13 10">
        <path d="M4 3h8v6H6" fill="#fff" stroke="#5f7fb8" />
        <path d="M3 0v6M0 3h6M1 1l4 4M5 1L1 5" stroke="#e39a2c" />
      </svg>
      <div className="ml-[5px] flex"><Slash /></div>
      <div className="ml-auto flex h-full w-[241px] items-center">
        <div className="h-[10px] w-[6px] border border-[#8f96a2] bg-[#f2f4f7]" />
        <svg className="ml-[6px]" width="4" height="6"><path d="M4 0v6L0 3z" fill="#4c5058" /></svg>
        <div className="ml-[5px] flex h-[11px] w-[19px] items-center justify-center gap-px border border-[#a3a9b4] bg-[#eef0f4]">
          <div className="h-[5px] w-px bg-[#8f96a2]" />
          <div className="h-[5px] w-px bg-[#8f96a2]" />
          <div className="h-[5px] w-px bg-[#8f96a2]" />
        </div>
        <svg className="ml-auto" width="4" height="6"><path d="M0 0v6l4-3z" fill="#4c5058" /></svg>
        <div className="mr-[13px] ml-[5px] h-[10px] w-[6px] border border-[#8f96a2] bg-[#f2f4f7]" />
      </div>
    </div>
  );
}

function StatusBar() {
  return (
    <div className="flex grow items-center border-t border-white bg-linear-to-b from-[#dde1e4] to-[#bec2c7] text-[#4c5058]">
      <div className="ml-[6.500px] flex"><Fit t="Ready" w={25.500} /></div>
      <div className="ml-[6px] h-[11px] w-px bg-[#a3a9b4]" />
      <div className="ml-auto h-[13px] w-px bg-[#b4b9c2]" />
      <svg className="ml-[3px] shrink-0" width="48" height="14" viewBox="0 0 48 14">
        <rect x="0" y="0" width="15.500" height="14" fill="#fbd25e" stroke="#d9a83a" />
        <path d="M3 3h9v8H3zM6 3v8M9 3v8M3 5.500h9M3 8.200h9" fill="#fff" stroke="#6a6656" strokeWidth=".9" />
        <path d="M18.500 2.500h9v9h-9z" fill="#d8dbe0" stroke="#6e737c" strokeWidth="1.600" />
        <rect x="21" y="4.500" width="4" height="5" fill="#fff" stroke="#6e737c" strokeWidth=".6" />
        <path d="M34.500 2.500h9.500v9h-9.500zM38 2.500v5M41 2.500v5M38 7.500h6" fill="#e8eaee" stroke="#6e737c" strokeWidth="1.300" />
      </svg>
      <div className="ml-[4px] flex"><Fit t="100%" w={22.500} /></div>
      <svg className="mr-[1px] ml-[5px] shrink-0" width="109" height="14" viewBox="0 0 109 14">
        <path d="M14 7h82" stroke="#8d929b" />
        <path d="M54 3v8" stroke="#8d929b" />
        <circle cx="7" cy="7" r="5.200" fill="#f2f4f6" stroke="#7b808a" />
        <path d="M4 7h6" stroke="#4c5058" strokeWidth="1.500" />
        <path d="M51 2h6v6.500L54 11.500 51 8.500z" fill="#f4f6f8" stroke="#7b808a" />
        <circle cx="101" cy="7" r="5.200" fill="#f2f4f6" stroke="#7b808a" />
        <path d="M98 7h6M101 4v6" stroke="#4c5058" strokeWidth="1.500" />
      </svg>
    </div>
  );
}

export default function App() {
  return (
    <div className="flex h-[1024px] w-[2048px] flex-col overflow-hidden bg-[#dde1e8] leading-none [text-rendering:geometricPrecision]">
      <TabBar />
      <Ribbon />
      <FormulaBar />
      <div className="flex h-[893px] shrink-0">
        <div className="flex w-[2036px] shrink-0 flex-col overflow-hidden">
          <ColumnHeads />
          {R.map((_, i) => (
            <SheetRow key={i} i={i} />
          ))}
          <div className="h-[4px] shrink-0 border-t border-[#5a6650] bg-[#cbd8a4]" />
        </div>
        <VerticalScroll />
      </div>
      <SheetTabs />
      <StatusBar />
    </div>
  );
}
